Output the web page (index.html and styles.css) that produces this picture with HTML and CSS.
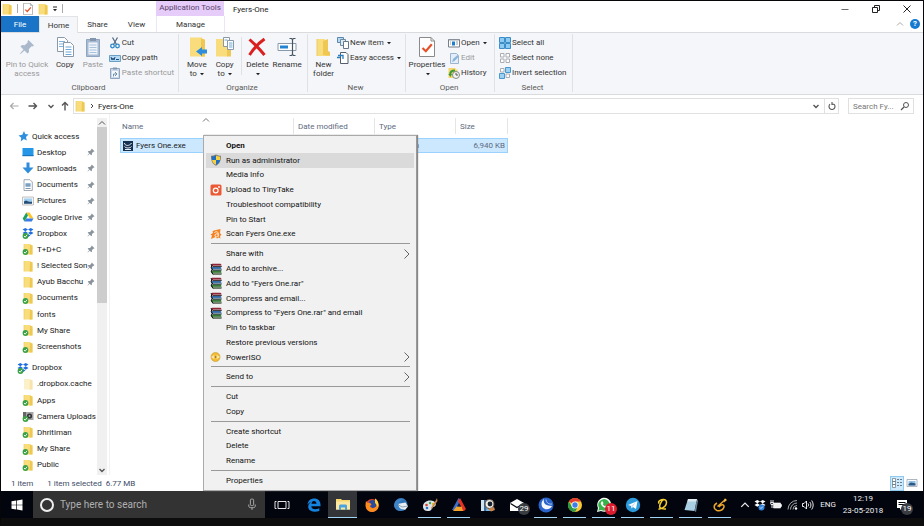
FILE: index.html
```html
<!DOCTYPE html>
<html lang="en">
<head>
    <meta charset="utf-8">
    <title>Fyers-One</title>
    <link rel="stylesheet" href="styles.css">
</head>
<body>
    <!-- icon sprites -->
    <svg class="sprites" aria-hidden="true">
        <symbol id="folder" viewBox="0 0 12 12"><path d="M2 1h6.500v1.500H10.500V11.500H2z" fill="#f9dd7c"/><path d="M8 1.500l2.500 1v9H7.500z" fill="#efc854"/><path d="M2 1v10.500" stroke="#eccb62" stroke-width=".7"/></symbol>
        <symbol id="folder-pale" viewBox="0 0 12 12"><path d="M2 1h6.500v1.500H10.500V11.500H2z" fill="#fcf0cb"/><path d="M8 1.500l2.500 1v9H7.500z" fill="#f7e3ab"/></symbol>
        <symbol id="tick" viewBox="0 0 12 12"><circle cx="3.500" cy="9" r="2.900" fill="#3ba144"/><path d="M2 9l1.200 1.200L5 7.800" fill="none" stroke="#fff" stroke-width=".9"/></symbol>
        <symbol id="folder-ok" viewBox="0 0 12 12"><use href="#folder" width="12" height="12"/><use href="#tick" width="12" height="12"/></symbol>
        <symbol id="pin" viewBox="0 0 16 16"><path d="M9.500 1l5.500 5.500-1.500 1-1-.2-2.700 3 .2 2.700-1.500 1.500-3-3L1.500 15 1 14.500l3.500-4-3-3L3 6l2.700.2 3-2.700-.2-1z" fill="currentColor"/></symbol>
        <symbol id="chev-up" viewBox="0 0 8 8"><path d="M1 5.500L4 2.500 7 5.500" fill="none" stroke="currentColor"/></symbol>
        <symbol id="chev-down" viewBox="0 0 8 8"><path d="M1.500 3L4 5.500 6.500 3" fill="none" stroke="currentColor" stroke-width="1.400"/></symbol>
        <symbol id="chev-right" viewBox="0 0 6 10"><path d="M.5.500L5 5 .5 9.500" fill="none" stroke="currentColor" stroke-width=".9"/></symbol>
        <symbol id="caret" viewBox="0 0 4 4"><path d="M0 1h4L2 3.200z" fill="#222"/></symbol>
        <symbol id="dropbox" viewBox="0 0 12 12"><path d="M3.300 1L6 2.600 3.300 4.300.5 2.600zM8.700 1l2.800 1.600-2.800 1.700L6 2.600zM3.300 4.300L6 6 3.300 7.700.5 6zM8.700 4.300L11.500 6 8.700 7.700 6 6zM3.500 8.500L6 7l2.500 1.500L6 10z" fill="#1f6fe0"/></symbol>
        <symbol id="dropbox-ok" viewBox="0 0 12 12"><use href="#dropbox" width="12" height="12"/><use href="#tick" width="12" height="12"/></symbol>
        <symbol id="sheet-check" viewBox="0 0 16 20"><path d="M.5.500h11.500l3.500 3.500v15.500H.5z" fill="#fff" stroke="#8a8a8a"/><path d="M12 .5V4h3.500" fill="none" stroke="#8a8a8a"/><path d="M3.500 11l3.300 3.200 6-7" fill="none" stroke="#e4522c" stroke-width="2.200"/></symbol>
        <symbol id="rar" viewBox="0 0 12 12"><path d="M2 .8h8.500l.8.800v2.400H3L1 2.500z" fill="#8e2638"/><path d="M1.500 4h9l.8.800v2.600H3L1 6z" fill="#2f6aa5"/><path d="M1.500 7.600h9l.8.800V11.200H3L1 9.500z" fill="#397a35"/><path d="M3 3.500h8.500M3 7h8.500M3 11h8.500" stroke="#181818" stroke-width=".9"/><path d="M3 2.800h8M3 6.300h8M3 10.200h8" stroke="#ddd" stroke-width=".6"/><path d="M1 1l1 2-1 1 1.500 3L1 8l2 3.500" fill="none" stroke="#111"/></symbol>
    </svg>

    <div class="window">
        <header class="titlebar">
            <div class="quick-bar">
                <svg class="icon"><use href="#folder"/></svg>
                <span class="bar"></span>
                <button class="plain" aria-label="Properties"><svg class="icon"><use href="#sheet-check"/></svg></button>
                <button class="plain" aria-label="New folder"><svg class="icon"><use href="#folder"/></svg></button>
                <button class="plain" aria-label="Customize"><svg class="customize" viewBox="0 0 6 6"><path d="M1 1h4" stroke="#222"/><path d="M1 3h4L3 5.200z" fill="#222"/></svg></button>
                <span class="bar"></span>
            </div>
            <div class="tools-label">Application Tools</div>
            <h1 class="title">Fyers-One</h1>
            <div class="controls">
                <button class="plain" aria-label="Minimize"><svg class="ctl" viewBox="0 0 10 10"><path d="M1.500 5.500h7" stroke="#444" stroke-width=".8"/></svg></button>
                <button class="plain" aria-label="Restore"><svg class="ctl" viewBox="0 0 10 10"><path d="M1.500 3.500h5v5h-5zM3.500 3.500v-2h5v5h-2" fill="none" stroke="#222"/></svg></button>
                <button class="plain" aria-label="Close"><svg class="ctl" viewBox="0 0 10 10"><path d="M1.500 1.500l7 7M8.500 1.500l-7 7" stroke="#222"/></svg></button>
            </div>
        </header>

        <nav class="tabs">
            <button class="tab file-tab">File</button>
            <button class="tab active">Home</button>
            <button class="tab">Share</button>
            <button class="tab">View</button>
            <button class="tab manage">Manage</button>
            <div class="tab-end">
                <button class="plain" aria-label="Collapse ribbon"><svg class="mini gray"><use href="#chev-up"/></svg></button>
                <button class="help" aria-label="Help">?</button>
            </div>
        </nav>

        <div class="ribbon">
            <section class="group clipboard">
                <div class="tools">
                    <button class="big off pin-quick"><svg class="big-icon faded"><use href="#pin"/></svg>Pin to Quick<br>access</button>
                    <button class="big"><svg class="big-icon" viewBox="0 0 20 20"><path d="M2.500.5h7l3 3v11h-10z" fill="#fff" stroke="#8b98a8"/><path d="M4 4.500h6M4 7h6M4 9.500h6" stroke="#7db4dc"/><path d="M8.500 5.500h7l3 3v11h-10z" fill="#fff" stroke="#8b98a8"/><path d="M10.500 10h6M10.500 12.500h6M10.500 15h6M10.500 17.500h6" stroke="#6ba9d8" stroke-width="1.200"/></svg>Copy</button>
                    <button class="big off"><svg class="big-icon" viewBox="0 0 20 20"><path d="M3.500 2.500h13v17h-13z" fill="#a7bad1" stroke="#8ea4c0"/><path d="M7 1h6v3H7z" fill="#8396ae"/><path d="M5.500 5.500h9v12h-9z" fill="#eef4fa"/><path d="M6.500 8h7M6.500 10.500h7M6.500 13h7M6.500 15.500h7" stroke="#a9c2db"/></svg>Paste</button>
                    <div class="stack">
                        <button class="small"><svg class="icon" viewBox="0 0 12 12"><path d="M3.500.5l4 7M8.500.5l-4 7" stroke="#52677f" stroke-width="1.200"/><circle cx="3.500" cy="9" r="1.800" fill="none" stroke="#2c87c9" stroke-width="1.300"/><circle cx="8.500" cy="9" r="1.800" fill="none" stroke="#2c87c9" stroke-width="1.300"/></svg>Cut</button>
                        <button class="small"><svg class="icon" viewBox="0 0 12 12"><path d="M.5 3.500h11v6H.5z" fill="#b6dcf5" stroke="#6d9fc2"/><path d="M2 5l1 3 1-2 1 2 1-3M7 7.500h3" fill="none" stroke="#1d4d7c"/></svg>Copy path</button>
                        <button class="small off"><svg class="icon" viewBox="0 0 12 12"><path d="M1.500 1.500h9v10h-9z" fill="#cbd8e7" stroke="#8ea4c0"/><path d="M4 .5h4v2H4z" fill="#8396ae"/><path d="M3 4h6v6H3z" fill="#f4f8fc"/><path d="M4.500 9.500V7H7.500M6 5l2 2-2 2" fill="none" stroke="#6f8eb0"/></svg>Paste shortcut</button>
                    </div>
                </div>
                <div class="caption">Clipboard</div>
            </section>
            <section class="group organize">
                <div class="tools">
                    <button class="big"><svg class="big-icon" viewBox="0 0 20 20"><path d="M3 .5h12v2h3v17H3z" fill="#f9dd7c"/><path d="M14 1l4 2v16.500h-4z" fill="#efc854"/><path d="M20 12.500v4h-5V19l-6-4.500 6-4.500v2.500z" fill="#2e8edb"/></svg>Move<br>to <svg class="caret"><use href="#caret"/></svg></button>
                    <button class="big"><svg class="big-icon" viewBox="0 0 20 20"><path d="M1 2h12v17.500H1z" fill="#f9dd7c"/><path d="M12 3l4 2v14.500h-4z" fill="#efc854"/><path d="M8.500.5h6v9h-6z" fill="#fff" stroke="#8b98a8"/><path d="M12.500 3.500h6v9h-6z" fill="#fff" stroke="#8b98a8"/><path d="M14 6h3.500M14 8h3.500M14 10h3.500M9.500 3h3" stroke="#6ba9d8"/></svg>Copy<br>to <svg class="caret"><use href="#caret"/></svg></button>
                    <span class="divider"></span>
                    <button class="big"><svg class="big-icon" viewBox="0 0 20 20"><path d="M2.500 2.500c5 4.500 10 9.500 15 15.500M17.500 2c-6 4-11 10-15 16" fill="none" stroke="#d9201f" stroke-width="3"/></svg>Delete<br><svg class="caret"><use href="#caret"/></svg></button>
                    <button class="big rename"><svg class="big-icon" viewBox="0 0 20 20"><path d="M1 6.500h18v7H1z" fill="#fff" stroke="#8b98a8"/><path d="M3 8.500h8v3H3z" fill="#2484d2"/><path d="M12.500 1.500h2l1 1 1-1h2M12.500 18.500h2l1-1 1 1h2M15.500 2.500v15" fill="none" stroke="#465564" stroke-width="1.200"/></svg>Rename</button>
                </div>
                <div class="caption">Organize</div>
            </section>
            <section class="group new">
                <div class="tools">
                    <button class="big"><svg class="big-icon" viewBox="0 0 20 20"><path d="M4 2h8v1.500h3V19H4z" fill="#f9dd7c"/><path d="M10 4l5-2v12l2 1v4l-7-1z" fill="#efc854"/><path d="M4 2v17" stroke="#eccb62"/></svg>New<br>folder</button>
                    <div class="stack">
                        <button class="small"><svg class="icon" viewBox="0 0 12 12"><path d="M.5.500h6v5h-6z" fill="#b7daf2" stroke="#5c87ab"/><path d="M3.500 2.500h5v6h-5z" fill="#dcecf7" stroke="#6d8aa5"/><path d="M6.500 4.500h5v7h-5z" fill="#fff" stroke="#6a7685"/></svg>New item<svg class="caret"><use href="#caret"/></svg></button>
                        <button class="small"><svg class="icon" viewBox="0 0 12 12"><path d="M3.500.5h5.500l2 2v9H3.500z" fill="#fff" stroke="#555f6b"/><path d="M0 5.500h3M1 3.500h5v3.500" fill="none" stroke="#2b7fc2" stroke-width="1.300"/></svg>Easy access<svg class="caret"><use href="#caret"/></svg></button>
                    </div>
                </div>
                <div class="caption">New</div>
            </section>
            <section class="group open">
                <div class="tools">
                    <button class="big props"><svg class="big-icon"><use href="#sheet-check"/></svg>Properties<br><svg class="caret"><use href="#caret"/></svg></button>
                    <div class="stack">
                        <button class="small"><svg class="icon" viewBox="0 0 12 12"><path d="M.5 2.500h11v7.500H.5z" fill="#fff" stroke="#777f88"/><path d="M1 3h10" stroke="#9aa3ac"/><path d="M4 4.500h3v4H4z" fill="#1d7ed0"/><path d="M2 5h1M2 7h1M8 5h2M8 7h2" stroke="#99a"/></svg>Open<svg class="caret"><use href="#caret"/></svg></button>
                        <button class="small off"><svg class="icon" viewBox="0 0 12 12"><path d="M2.500 1.500h6l2 2v8h-8z" fill="#e3eefa" stroke="#9db6cf"/><path d="M4 10l1-3 4.500-4 1.500 1.500L6.500 9z" fill="#8db4d8"/></svg>Edit</button>
                        <button class="small"><svg class="icon" viewBox="0 0 12 12"><path d="M.5 1h7v1.500h2V11h-9z" fill="#f6d56c"/><circle cx="8" cy="8" r="3.500" fill="#f3f3f3" stroke="#828c82"/><path d="M8 6v2h2" fill="none" stroke="#555"/><path d="M2 8c0-3 2-4.500 5-4.500" fill="none" stroke="#3a9b37" stroke-width="1.800"/><path d="M.3 7l3.800-.2L2.500 10z" fill="#3a9b37"/></svg>History</button>
                    </div>
                </div>
                <div class="caption">Open</div>
            </section>
            <section class="group select">
                <div class="tools">
                    <div class="stack">
                        <button class="small"><svg class="icon" viewBox="0 0 12 12"><path d="M.5.500h5v5h-5zM6.500.5h5v5h-5zM.5 6.500h5v5h-5zM6.500 6.500h5v5h-5z" fill="#8ecbf2" stroke="#3c8dc7"/></svg>Select all</button>
                        <button class="small"><svg class="icon" viewBox="0 0 12 12"><path d="M1.500 1.500h3.500v3.500h-3.500zM7 1.500h3.500v3.500H7zM1.500 7h3.500v3.500h-3.500zM7 7h3.500v3.500H7z" fill="#fff" stroke="#a9adb2"/></svg>Select none</button>
                        <button class="small"><svg class="icon" viewBox="0 0 12 12"><path d="M1.500 1.500H5V5H1.500zM7 7h3.500v3.500H7z" fill="#fff" stroke="#a9adb2"/><path d="M6.500.5h5v5h-5zM.5 6.500h5v5h-5z" fill="#9bd1f5" stroke="#4a97cc"/></svg>Invert selection</button>
                    </div>
                </div>
                <div class="caption">Select</div>
            </section>
        </div>

        <div class="address-row">
            <div class="arrows">
                <button class="plain" aria-label="Back"><svg class="arrow pale" viewBox="0 0 10 10"><path d="M9.500 5h-8M4.500 2l-3 3 3 3" fill="none" stroke="currentColor" stroke-width="1.200"/></svg></button>
                <button class="plain" aria-label="Forward"><svg class="arrow" viewBox="0 0 10 10"><path d="M.5 5h8M5.500 2l3 3-3 3" fill="none" stroke="currentColor" stroke-width="1.400"/></svg></button>
                <button class="plain" aria-label="Recent"><svg class="mini"><use href="#chev-down"/></svg></button>
                <button class="plain" aria-label="Up"><svg class="arrow" viewBox="0 0 10 10"><path d="M5 9.500v-8M2 4.500l3-3 3 3" fill="none" stroke="currentColor" stroke-width="1.400"/></svg></button>
            </div>
            <div class="address">
                <svg class="icon"><use href="#folder"/></svg>
                <svg class="crumb" viewBox="0 0 4 6"><path d="M1 1l2 2-2 2" fill="none" stroke="#444"/></svg>
                <span class="path">Fyers-One</span>
                <button class="plain" aria-label="Previous locations"><svg class="mini"><use href="#chev-down"/></svg></button>
                <button class="plain refresh" aria-label="Refresh"><svg class="ctl" viewBox="0 0 10 10"><path d="M3 3.200a3 3 0 1 0 4 0M7 3.200H4.500M5 1v3" fill="none" stroke="currentColor" stroke-width="1.100"/></svg></button>
            </div>
            <label class="search">
                <input type="text" placeholder="Search Fy..." aria-label="Search folder">
                <svg class="ctl" viewBox="0 0 10 10"><circle cx="6" cy="4" r="2.500" fill="none" stroke="currentColor"/><path d="M4 6L1 9" stroke="currentColor" stroke-width="1.300"/></svg>
            </label>
        </div>

        <main class="content">
            <nav class="sidebar">
                <ul class="tree">
                    <li class="root"><svg class="icon" viewBox="0 0 12 12"><path d="M7 1l1.200 3L11.500 4.500 9 7l.8 3.500-3-1.500-3 2.500.4-3.800L1.500 5.500l3.800-.8z" fill="#2f8fdf"/></svg><a href="#">Quick access</a></li>
                    <li><svg class="icon" viewBox="0 0 12 12"><path d="M.5 2h11v8H.5z" fill="#2597e6"/><path d="M.5 9h11v1.200H.5z" fill="#1a74bd"/></svg><a href="#">Desktop</a><svg class="pin"><use href="#pin"/></svg></li>
                    <li><svg class="icon" viewBox="0 0 12 12"><path d="M4.500.5h3V5.500H11.500L6 11.500.5 5.500h4z" fill="#2e8edb"/></svg><a href="#">Downloads</a><svg class="pin"><use href="#pin"/></svg></li>
                    <li><svg class="icon" viewBox="0 0 12 12"><path d="M2 .7h6l2.300 2.300v8.500H2z" fill="#fff" stroke="#8a949e" stroke-width=".8"/><path d="M3.500 4h5v4h-5z" fill="#8fb9dc"/><path d="M3.500 9.500h5M3.500 6h5" stroke="#617990" stroke-width=".8"/></svg><a href="#">Documents</a><svg class="pin"><use href="#pin"/></svg></li>
                    <li><svg class="icon" viewBox="0 0 12 12"><path d="M.5 2h11v8H.5z" fill="#f5f5f5" stroke="#b5b5b5" stroke-width=".8"/><path d="M2 3.500h8v5H2z" fill="#9fd0f1"/><path d="M2 6.500l2-1 3 1.200h3v2H2z" fill="#274d74"/></svg><a href="#">Pictures</a><svg class="pin"><use href="#pin"/></svg></li>
                    <li><svg class="icon" viewBox="0 0 12 12"><path d="M4.300 1.500h3.400l3.800 6H8z" fill="#fbc52d"/><path d="M4.300 1.500L6 4.500l-3.600 6L.7 7.500z" fill="#1ba15f"/><path d="M4.200 7.500h7.300l-1.700 3H2.400z" fill="#3b7be8"/></svg><a href="#">Google Drive</a><svg class="pin"><use href="#pin"/></svg></li>
                    <li><svg class="icon"><use href="#dropbox-ok"/></svg><a href="#">Dropbox</a><svg class="pin"><use href="#pin"/></svg></li>
                    <li><svg class="icon"><use href="#folder-ok"/></svg><a href="#">T+D+C</a><svg class="pin"><use href="#pin"/></svg></li>
                    <li><svg class="icon"><use href="#folder"/></svg><a href="#">! Selected Son</a><svg class="pin"><use href="#pin"/></svg></li>
                    <li><svg class="icon"><use href="#folder"/></svg><a href="#">Ayub Bacchu</a><svg class="pin"><use href="#pin"/></svg></li>
                    <li><svg class="icon"><use href="#folder-ok"/></svg><a href="#">Documents</a></li>
                    <li><svg class="icon"><use href="#folder"/></svg><a href="#">fonts</a></li>
                    <li><svg class="icon"><use href="#folder-ok"/></svg><a href="#">My Share</a></li>
                    <li><svg class="icon"><use href="#folder-ok"/></svg><a href="#">Screenshots</a></li>
                    <li class="gap"></li>
                    <li class="root"><svg class="icon"><use href="#dropbox-ok"/></svg><a href="#">Dropbox</a></li>
                    <li><svg class="icon"><use href="#folder-pale"/></svg><a href="#">.dropbox.cache</a></li>
                    <li><svg class="icon"><use href="#folder-ok"/></svg><a href="#">Apps</a></li>
                    <li><svg class="icon" viewBox="0 0 12 12"><path d="M1 2h10.500v8H1z" fill="#a5a5a5"/><path d="M1 2h3v8H1z" fill="#666"/><circle cx="7.500" cy="6" r="2.600" fill="#333"/><circle cx="7.500" cy="6" r="1" fill="#9ab"/><use href="#tick" width="12" height="12"/></svg><a href="#">Camera Uploads</a></li>
                    <li><svg class="icon"><use href="#folder-ok"/></svg><a href="#">Dhritiman</a></li>
                    <li><svg class="icon"><use href="#folder-ok"/></svg><a href="#">My Share</a></li>
                    <li><svg class="icon"><use href="#folder-ok"/></svg><a href="#">Public</a></li>
                </ul>
                <div class="scrollbar">
                    <svg class="mini"><use href="#chev-up"/></svg>
                    <div class="track"><div class="thumb"></div></div>
                    <svg class="mini"><use href="#chev-down"/></svg>
                </div>
            </nav>
            <div class="files">
                <table class="file-table">
                    <thead>
                        <tr><th class="name">Name<svg class="sort"><use href="#chev-up"/></svg></th><th>Date modified</th><th>Type</th><th class="size">Size</th></tr>
                    </thead>
                    <tbody>
                        <tr><td class="name"><span class="file"><svg class="icon" viewBox="0 0 12 12"><path d="M1 1h10v10H1z" fill="#16304f"/><path d="M2.500 3c0 3 5 3.500 7 0M2.500 6.500c1.500 2 5.500 2 7 0M3 9.500h6" fill="none" stroke="#e8eef5"/></svg>Fyers One.exe</span></td><td></td><td>Application</td><td class="size">6,940 KB</td></tr>
                    </tbody>
                </table>
            </div>
        </main>

        <footer class="status">
            <span>1 item</span>
            <span>1 item selected&nbsp; 6.77 MB</span>
            <div class="views">
                <button class="view on" aria-label="Details"><svg class="icon" viewBox="0 0 12 12"><path d="M1.500 1.500h3v9h-3z" fill="#fff" stroke="#76828e" stroke-width=".8"/><path d="M1.500 4.500h3M1.500 7.500h3M6 2.500h2M9 2.500h2M6 5.500h2M9 5.500h2M6 8.500h2M9 8.500h2" stroke="#5f6f80" stroke-width=".9"/></svg></button>
                <button class="view" aria-label="Large icons"><svg class="icon" viewBox="0 0 12 12"><path d="M1 2.500h10v7H1z" fill="#fff" stroke="#9aa5b0" stroke-width=".8"/><path d="M2.500 4h7v4.500h-7z" fill="#8fc0e6"/><path d="M2.500 7l2.500-1.500 4.500 1v2h-7z" fill="#2d5780"/></svg></button>
            </div>
        </footer>

        <div class="menu" role="menu">
            <button class="item strong">Open</button>
            <button class="item hover"><svg class="icon" viewBox="0 0 12 12"><path d="M6 .5c1.500 1 3 1.300 5 1.300C11 7 9.500 10 6 11.700 2.500 10 1 7 1 1.800c2 0 3.500-.3 5-1.300z" fill="#777"/><path d="M6 1.500v4.500H2C1.800 4.500 1.800 3.500 1.800 2.500 3.500 2.500 5 2.200 6 1.500zM6 6h4c-.5 2.200-2 3.900-4 4.800z" fill="#1f6fc0"/><path d="M6 1.500v4.500h4c.2-1.500.2-2.500.2-3.500C8.500 2.500 7 2.200 6 1.500zM6 6H2c.5 2.200 2 3.900 4 4.800z" fill="#f8d13f"/></svg>Run as administrator</button>
            <button class="item">Media Info</button>
            <button class="item"><svg class="icon" viewBox="0 0 12 12"><rect x=".5" y=".5" width="11" height="11" rx="1.500" fill="#ec5a35"/><circle cx="5.700" cy="6.500" r="2.400" fill="none" stroke="#fff" stroke-width="1.200"/><circle cx="9" cy="3" r=".9" fill="#fff"/></svg>Upload to TinyTake</button>
            <button class="item">Troubleshoot compatibility</button>
            <button class="item">Pin to Start</button>
            <button class="item"><svg class="icon" viewBox="0 0 12 12"><path d="M6 2l4.500-1-.5 4 1.500 2-1.500 1 .5 2.500-2-1-1.500 1-1.500-1.500L1 11l1-3.500L.5 6.500 3 5 2.500 3z" fill="#f58220"/><path d="M4.500 4.500c2-1.500 4-.5 3.800 1.500v2.500M8 6C6 5.500 4.500 6.500 5 8s2.500 1 3-.5" fill="none" stroke="#fff" stroke-width=".9"/></svg>Scan Fyers One.exe</button>
            <hr>
            <button class="item">Share with<svg class="more"><use href="#chev-right"/></svg></button>
            <button class="item"><svg class="icon"><use href="#rar"/></svg>Add to archive...</button>
            <button class="item"><svg class="icon"><use href="#rar"/></svg>Add to "Fyers One.rar"</button>
            <button class="item"><svg class="icon"><use href="#rar"/></svg>Compress and email...</button>
            <button class="item"><svg class="icon"><use href="#rar"/></svg>Compress to "Fyers One.rar" and email</button>
            <button class="item">Pin to taskbar</button>
            <button class="item">Restore previous versions</button>
            <button class="item"><svg class="icon" viewBox="0 0 12 12"><circle cx="5.500" cy="6" r="4.500" fill="#f0bd35" stroke="#c8922a" stroke-width=".6"/><path d="M1.500 6h8M4 4.300L2.500 6 4 7.700M7 4.300L8.500 6 7 7.700" fill="none" stroke="#fff7d0" stroke-width=".9"/><circle cx="5.500" cy="6" r="1" fill="#a8741c"/></svg>PowerISO<svg class="more"><use href="#chev-right"/></svg></button>
            <hr>
            <button class="item">Send to<svg class="more"><use href="#chev-right"/></svg></button>
            <hr>
            <button class="item">Cut</button>
            <button class="item">Copy</button>
            <hr>
            <button class="item">Create shortcut</button>
            <button class="item">Delete</button>
            <button class="item">Rename</button>
            <hr>
            <button class="item">Properties</button>
        </div>
    </div>

    <div class="taskbar">
        <button class="start" aria-label="Start"><svg class="icon" viewBox="0 0 12 12"><path d="M.5 2.200L5.300 1.500V5.700H.5zM6 1.400L11.500.6V5.700H6zM.5 6.300h4.800v4.200L.5 9.800zM6 6.300h5.500v5.100L6 10.600z" fill="#fff"/></svg></button>
        <label class="cortana">
            <svg class="ring" viewBox="0 0 16 16"><circle cx="8" cy="8" r="6" fill="none" stroke="#eee" stroke-width="2"/></svg>
            <input type="text" placeholder="Type here to search" aria-label="Search">
            <svg class="mic" viewBox="0 0 8 12"><rect x="2.500" y="1" width="3" height="6" rx="1" fill="none" stroke="#bbb" stroke-width=".8"/><path d="M1 6v1.500c0 1 1 1.500 3 1.500s3-.5 3-1.500V6M4 9v2" fill="none" stroke="#bbb" stroke-width=".8"/></svg>
        </label>
        <button class="task view-tasks" aria-label="Task view"><svg viewBox="0 0 16 16"><path d="M4 4.500h8v7H4zM2.500 4.500H1v7h1.500M13.500 4.500H15v7h-1.500" fill="none" stroke="#e5e5e5"/></svg></button>
        <button class="task" aria-label="Edge"><svg viewBox="0 0 16 16"><path d="M1.500 7.500C2 3.500 4.800 1.500 8.300 1.500c3.900 0 6.200 2.500 6.200 6.300v1.500H5.300c.2 3 3.800 3.700 8 1.900v2.800C8 16 2 14.200 2.200 9.500 2.300 7 4 5.200 6 4.400 4.500 4.800 2.800 5.900 1.500 7.500zM5.500 6.800h5C10.500 5.200 9.500 4 8 4S5.600 5.200 5.500 6.800z" fill="#1583dd"/></svg></button>
        <button class="task current" aria-label="File Explorer"><svg viewBox="0 0 16 16"><path d="M1 3h5l1 1h8v9.500H1z" fill="#f7d670"/><path d="M1 5.500h14v8H1z" fill="#fbe7a0"/><path d="M4 14V9.500l1-1h6l1 1V14h-2v-2.500H6V14z" fill="#4aa3df"/></svg></button>
        <button class="task" aria-label="Firefox"><svg viewBox="0 0 16 16"><circle cx="8" cy="8.500" r="6.500" fill="#e8432a"/><circle cx="8.500" cy="7" r="4" fill="#2b4a9b"/><path d="M2 4l1.500 2c2-.5 3 0 4 1.500L6 9c1 2.500 4 3 6 .5 1-2 .5-4-1-6l.5-2C14.500 4 15.500 8 14 11.500c-2.500 4.500-9 4.500-11.500.5C1.500 9.500 1.500 6.500 2 4z" fill="#f98d20"/><path d="M11 1.500c3 2 4 5.500 3 9-.5-1-1-3-3-4.500z" fill="#ffd43c"/></svg></button>
        <button class="task" aria-label="Thunderbird"><svg viewBox="0 0 16 16"><circle cx="8" cy="7.500" r="6.500" fill="#2e73b8"/><path d="M4 7l8.500-1.500 2.500 4-3 3.500-6-1z" fill="#e8edf2"/><path d="M4 7l5 3 6-1" fill="none" stroke="#8fa1b5"/><path d="M1 9c0-6 6-9 11-6.500-4 .5-6 2-6.500 4.500C5 10 8 13 12 12.500 7 15.500 2 13.500 1 9z" fill="#3c83c8"/></svg></button>
        <button class="task running" aria-label="Paint"><svg viewBox="0 0 16 16"><path d="M1 9.500C1 5.500 5 3 9 3.500c4 .3 5.500 3 4.500 5s-3 1-3.500 2.500c-.5 2.500-2 3-4.500 3C2.500 14 1 12 1 9.500z" fill="#dce4ea"/><circle cx="4.500" cy="8" r="1.300" fill="#d8402d"/><circle cx="8" cy="6" r="1.200" fill="#3fa14a"/><circle cx="11" cy="7" r="1.200" fill="#e9b62e"/><circle cx="5" cy="11" r="1.300" fill="#2f74c4"/><path d="M9 11l5-8 1-2 .5 3-5.500 8z" fill="#c4864b"/></svg></button>
        <button class="task running" aria-label="AIMP"><svg viewBox="0 0 16 16"><path d="M7.500 1L11 5.500 6 13H1z" fill="#3d6fc4"/><path d="M9 1l6 11-2 2H9.500L10 10 7 4z" fill="#e53323"/><path d="M2 14l3.500-4.500h5L12 14z" fill="#f2a52a"/><path d="M6 9.500l2-3.500 2 3.500z" fill="#121a33"/></svg></button>
        <button class="task" aria-label="Viewer"><svg viewBox="0 0 16 16"><path d="M1 3h12v11H1z" fill="#7fb7df"/><path d="M1 3h3v11H1z" fill="#cfe4f2"/><path d="M4 3h4l-2 11H4z" fill="#3d6c9c"/><circle cx="9.500" cy="7" r="4.500" fill="#f1eee8" stroke="#594538"/><circle cx="10" cy="7" r="2.400" fill="#17222c"/><path d="M8 12l6-2 1 3-4 1.500z" fill="#c7854d"/></svg></button>
        <button class="task" aria-label="Mail"><svg viewBox="0 0 16 16"><path d="M1 6l7-4 7 4v8H1z" fill="#fff"/><path d="M1.500 6.500L8 10.500l6.500-4" fill="none" stroke="#05080f" stroke-width="1.200"/></svg><span class="badge dark">29</span></button>
        <button class="task running" aria-label="CCleaner"><svg viewBox="0 0 16 16"><circle cx="8" cy="8" r="7.500" fill="#2a63c9"/><path d="M6 2c-1 4 1 7 8 7-2 4-8 4.500-10 .5-1.200-3 0-6 2-7.500z" fill="#f5f8fd"/><path d="M8 2.500C8.500 6 11 7.500 14 7" fill="none" stroke="#a7c5f0"/></svg></button>
        <button class="task running" aria-label="Chrome"><svg viewBox="0 0 16 16"><circle cx="8" cy="8" r="7" fill="#fcc934"/><path d="M8 8L1.900 4.500A7 7 0 0 1 14.100 4.500H8z" fill="#e33b2e"/><path d="M1.900 4.500L8 15A7 7 0 0 1 1.900 4.500z" fill="#279847"/><path d="M5 9.700L8 15l3-5.300z" fill="#279847"/><circle cx="8" cy="8" r="3.500" fill="#fff"/><circle cx="8" cy="8" r="2.700" fill="#3f7ee8"/></svg></button>
        <button class="task running" aria-label="WhatsApp"><svg viewBox="0 0 16 16"><path d="M1 15l1-4A7 7 0 1 1 5 14z" fill="#fff"/><path d="M2.300 13.700l.8-2.800A5.800 5.800 0 1 1 5.200 12.900z" fill="#37b34a"/><path d="M5.500 4.500l1-.3 1 2-.7 1c.5 1 1.200 1.600 2.200 2l1-.8 1.700 1c0 1.200-1 1.700-2 1.500C7 10.300 5.200 8.500 4.700 6.500z" fill="#fff"/></svg><span class="badge red">11</span></button>
        <button class="task running" aria-label="Telegram"><svg viewBox="0 0 16 16"><circle cx="8" cy="8" r="7.200" fill="#2b9bdc"/><path d="M3 8l9.500-4-1.500 8-3-2-1.500 1.500-.5-2.500z" fill="#fff"/><path d="M6 9l5-4-3.500 5" fill="#c5dcec"/></svg></button>
        <button class="task running" aria-label="Quick notes"><svg viewBox="0 0 16 16"><path d="M5 6.500C3.500 4 7 2.500 9.500 2.500c3.500 0 3.500 3.500 2 6-1.500 2.200-4.500 3.500-5.500 2S6.500 5 9.500 2.500M4.500 12.500c2-2 4.500-.5 7.500-.5" fill="none" stroke="#f5ce2c" stroke-width="1.500"/></svg></button>
        <button class="task running" aria-label="Notepad"><svg viewBox="0 0 16 16"><path d="M5 2h9l-2.500 12L1.500 13z" fill="#a8cfe3"/><path d="M5 2h9l-.5 2.500-9 0z" fill="#dfeaf0"/><path d="M14 2l1 2-2 11-1.500-1z" fill="#64849a"/></svg></button>
        <button class="task running" aria-label="Pen"><svg viewBox="0 0 16 16"><path d="M14 2L5.500 9.500M5 6C1 8 1.500 12 5 13.500c3.500 1 7.500-1.500 7-4.500-.5-2-3-1.500-5 1" fill="none" stroke="#eba62a" stroke-width="1.500"/><path d="M12.500 1.500L15 3l-3 2.500z" fill="#f3c04c"/></svg></button>
        <div class="tray">
            <button class="plain" aria-label="Show hidden icons"><svg class="tray-icon"><use href="#chev-up"/></svg></button>
            <svg class="icon" viewBox="0 0 12 12"><path d="M3.300 1L6 2.600 3.300 4.300.5 2.600zM8.700 1l2.800 1.600-2.800 1.700L6 2.600zM3.300 4.300L6 6 3.300 7.700.5 6zM8.700 4.300L11.500 6 8.700 7.700 6 6z" fill="#fff"/><circle cx="7.500" cy="8.500" r="3" fill="#2f83dd"/><path d="M6 8.500l1 1 2-2" fill="none" stroke="#fff" stroke-width=".8"/></svg>
            <svg class="icon" viewBox="0 0 12 12"><path d="M3.500 4h7v5h-7zM10.500 5.500h1v2h-1z" fill="#eee" stroke="#fff" stroke-width=".6"/><path d="M1 1v2M3 1v2M.5 3.500h3l-.5 2H1zM2 5.500V9" fill="none" stroke="#fff" stroke-width=".9"/></svg>
            <svg class="icon" viewBox="0 0 12 12"><path d="M2 10.500A9 9 0 0 1 11 1.500M4.500 10.500A6.500 6.500 0 0 1 11 4M7 10.500a4 4 0 0 1 4-4" fill="none" stroke="#bbb" stroke-width=".9"/><circle cx="10" cy="9.500" r="1.200" fill="#fff"/></svg>
            <svg class="icon" viewBox="0 0 12 12"><path d="M.5 4.500h1.500l2.500-2.500v8L2 7.500H.5zM6 4.500c.8 1 .8 2 0 3M7.800 3c1.500 2 1.500 4 0 6M9.700 1.500c2 3 2 6 0 9" fill="none" stroke="#fff" stroke-width=".9"/></svg>
            <span class="lang">ENG</span>
            <div class="clock">12:19<br>23-05-2018</div>
            <button class="plain notify" aria-label="Notifications"><svg class="icon" viewBox="0 0 12 12"><path d="M1 1h10v8H6l-2 2V9H1z" fill="#fff"/><path d="M2.500 3.500h7M2.500 5.500h7" stroke="#05080f"/></svg><span class="badge dark">19</span></button>
        </div>
    </div>
</body>
</html>
```

FILE: styles.css
```css
* {
    box-sizing: border-box;
}
body {
    margin: 0;
    height: 100vh;
    display: flex;
    flex-direction: column;
    background-color: #0d0d0d;
    border: 1px solid #07050a;
    border-bottom: 8px solid #0d0d0d;
    font-family: Roboto, "Open Sans", sans-serif;
    font-size: 8px;
    line-height: 9px;
    color: #1a1a1a;
}
button, input {
    font: inherit;
    color: inherit;
    background: none;
    border: none;
    padding: 0;
    margin: 0;
}
input {
    min-width: 0;
    flex: 1;
}
a {
    color: inherit;
    text-decoration: none;
}
svg {
    display: block;
    flex: none;
}
.sprites {
    position: absolute;
    width: 0;
    height: 0;
}
.icon {
    width: 12px;
    height: 12px;
}
.mini {
    width: 8px;
    height: 8px;
    color: #555;
}
.customize {
    width: 6px;
    height: 6px;
}
.ctl, .arrow {
    width: 10px;
    height: 10px;
    color: #555;
}
.pale, .gray {
    color: #aaa;
}
.plain {
    display: flex;
    align-items: center;
    justify-content: center;
}
.window {
    position: relative;
    flex: 1;
    min-height: 0;
    display: flex;
    flex-direction: column;
    background-color: #fff;
}

/* title bar */
.titlebar {
    display: flex;
    height: 15px;
    align-items: center;
}
.quick-bar {
    width: 155px;
    display: flex;
    align-items: center;
    gap: 3px;
}
.quick-bar .bar {
    width: 1px;
    height: 9px;
    margin: 0 1px;
    background-color: #aaa;
}
.tools-label {
    width: 68px;
    height: 15px;
    line-height: 14px;
    text-align: center;
    white-space: nowrap;
    background-color: #e6ccf8;
    color: #59416b;
}
.title {
    margin: 1px 0 0 9px;
    font-size: 8px;
    font-weight: normal;
    flex: 1;
}
.controls {
    display: flex;
    gap: 21px;
    padding-right: 11px;
}

/* ribbon tabs */
.tabs {
    display: flex;
    height: 16px;
}
.tab {
    width: 39px;
    color: #333;
}
.tab.file-tab {
    width: 38px;
    background-color: #1974c8;
    color: #fff;
}
.tab.active {
    background-color: #f5f6f9;
    border: 1px solid #e2e3e5;
    border-bottom: none;
    margin-bottom: -1px;
    z-index: 1;
}
.tab.manage {
    width: 69px;
    border: 1px solid #eee5f4;
    border-width: 0 1px;
}
.tab-end {
    margin-left: auto;
    display: flex;
    align-items: center;
    gap: 6px;
    padding-right: 3px;
}
.help {
    width: 10px;
    height: 10px;
    line-height: 10px;
    border-radius: 50%;
    background-color: #1479d0;
    color: #fff;
    font-weight: bold;
}

/* ribbon */
.ribbon {
    display: flex;
    height: 63px;
    background-color: #f5f6f9;
    border: 1px solid #dadbdc;
    border-width: 1px 0;
}
.group {
    display: flex;
    flex-direction: column;
    justify-content: space-between;
    margin: 1px 0 2px;
    padding: 3px 4px 0 2px;
    border-right: 1px solid #e0e1e4;
}
.clipboard {
    width: 178px;
}
.organize {
    width: 129px;
}
.new {
    width: 98px;
}
.open {
    width: 89px;
}
.select {
    width: 78px;
}
.tools {
    display: flex;
    align-items: flex-start;
}
.caption {
    text-align: center;
    color: #5a5a5a;
}
.big {
    width: 28px;
    white-space: nowrap;
    display: block;
    color: #333;
}
.big.pin-quick {
    width: 48px;
}
.big.props {
    width: 38px;
}
.big.rename {
    width: 32px;
}
.big-icon {
    width: 20px;
    height: 20px;
    margin: 0 auto 3px;
}
.faded {
    color: #a9b9cb;
    padding: 2px;
}
.off {
    color: #999;
}
.caret {
    display: inline-block;
    width: 4px;
    height: 4px;
    margin-left: 1px;
}
.stack {
    margin: -2px 0 0 2px;
}
.small {
    display: flex;
    align-items: center;
    gap: 1px;
    height: 15px;
    white-space: nowrap;
    color: #333;
}
.small.off {
    color: #999;
}
.small .caret {
    margin-left: 2px;
}
.organize .tools, .new .tools {
    padding-left: 2px;
}
.divider {
    width: 1px;
    height: 38px;
    margin: 0 2px;
    background-color: #e0e1e4;
}

/* address bar */
.address-row {
    display: flex;
    padding: 3px 9px 0 0;
    height: 19px;
    gap: 9px;
}
.arrows {
    display: flex;
    align-items: center;
    gap: 9px;
    padding-left: 8px;
    width: 63px;
}
.arrows .mini {
    margin-right: -4px;
}
.address, .search {
    display: flex;
    align-items: center;
    border: 1px solid #e0e0e0;
}
.address {
    flex: 1;
    gap: 4px;
}
.crumb {
    width: 4px;
    height: 6px;
}
.path {
    flex: 1;
}
.refresh {
    width: 14px;
    height: 14px;
    border-left: 1px solid #e0e0e0;
}
.search {
    width: 66px;
    padding: 0 3px 0 4px;
}
.search input::placeholder {
    color: #777;
}

/* folder view */
.content {
    flex: 1;
    min-height: 0;
    display: flex;
}
.sidebar {
    display: flex;
    width: 109px;
    border-right: 1px solid #f2f2f2;
    padding-top: 4px;
}
.tree {
    flex: 1;
    min-width: 0;
    list-style: none;
    margin: 0;
    padding: 10px 0 2px;
    display: flex;
    flex-direction: column;
    white-space: nowrap;
}
.tree li {
    flex: 1;
    display: flex;
    align-items: center;
    gap: 3px;
    padding-left: 21px;
}
.tree li.root {
    padding-left: 16px;
}
.tree li.gap {
    flex: none;
    height: 5px;
}
.tree a {
    flex: 1;
    min-width: 0;
}
.tree .pin {
    width: 8px;
    height: 8px;
    margin-right: 2px;
    color: #8b949d;
}
.scrollbar {
    width: 10px;
    margin-right: 2px;
    display: flex;
    flex-direction: column;
    align-items: center;
    background-color: #f0f0f0;
    padding: 1px 0;
}
.track {
    flex: 1;
    width: 100%;
}
.thumb {
    height: 52%;
    background-color: #cdcdcd;
}
.files {
    flex: 1;
    padding: 4px 0 0 10px;
}
.file-table {
    width: 388px;
    table-layout: fixed;
    border-collapse: separate;
    border-spacing: 0;
    color: #5d6a80;
}
.file-table th {
    height: 16px;
    padding: 0 4px;
    text-align: left;
    font-weight: normal;
    width: 81px;
    border-right: 1px solid #e5e5e5;
}
.file-table th.name {
    position: relative;
    width: 174px;
    padding-left: 2px;
}
.file-table th.size {
    width: 52px;
}
.sort {
    position: absolute;
    top: -2px;
    left: calc(50% - 5px);
    width: 8px;
    height: 8px;
    color: #777;
}
.file-table tbody::before {
    content: "";
    display: block;
    height: 4px;
}
.file-table td {
    height: 15px;
    padding: 0 4px;
    background-color: #cce8ff;
    border: 1px solid #99d1ff;
    border-width: 1px 0;
}
.file-table td.name {
    padding-left: 1px;
    border-left-width: 1px;
    color: #1a1a1a;
}
.file-table td.size {
    padding-right: 2px;
    text-align: right;
    border-right-width: 1px;
}
.file {
    display: flex;
    align-items: center;
    gap: 2px;
}

/* status bar */
.status {
    height: 16px;
    display: flex;
    align-items: center;
    gap: 14px;
    padding-left: 10px;
    color: #3b4a66;
}
.views {
    margin-left: auto;
    display: flex;
    gap: 1px;
    padding-right: 4px;
}
.view {
    width: 14px;
    height: 15px;
    display: flex;
    align-items: center;
    justify-content: center;
}
.view.on {
    background-color: #cde9fb;
    border: 1px solid #8fcbee;
}

/* context menu, floats over the file list */
.menu {
    position: absolute;
    top: 134px;
    left: 202px;
    bottom: 0;
    width: 214px;
    display: flex;
    flex-direction: column;
    padding: 2px;
    background-color: #f1f1f1;
    border: 1px solid #aaa;
    border-right-color: #999;
    box-shadow: 1px 0 1px #888;
    color: #111;
}
.item {
    flex: 1;
    min-height: 0;
    display: flex;
    align-items: center;
    position: relative;
    padding-left: 20px;
    white-space: nowrap;
}
.item .icon {
    margin: 0 4px 0 -16px;
}
.item.strong {
    font-weight: bold;
}
.item.hover {
    background-color: #dadada;
}
.more {
    width: 6px;
    height: 10px;
    margin-left: auto;
    margin-right: 4px;
    color: #555;
}
.menu hr {
    width: calc(100% - 9px);
    height: 1px;
    margin: 2px 4px 2px 5px;
    border: none;
    background-color: #999;
}

/* taskbar */
.taskbar {
    display: flex;
    height: 27px;
    background-color: #02050e;
    color: #eee;
}
.start {
    width: 32px;
    display: flex;
    align-items: center;
    justify-content: center;
}
.cortana {
    width: 232px;
    display: flex;
    align-items: center;
    background-color: #333;
    padding: 0 8px 0 6px;
    gap: 5px;
    font-size: 10px;
}
.cortana input::placeholder {
    color: #b0b0b0;
}
.ring {
    width: 16px;
    height: 16px;
}
.mic {
    width: 10px;
    height: 13px;
}
.task {
    position: relative;
    width: 29px;
    display: flex;
    align-items: center;
    justify-content: center;
}
.task svg {
    width: 16px;
    height: 16px;
}
.task.view-tasks {
    width: 34px;
}
.task.current {
    background-color: #333538;
    border-bottom: 1px solid #9fd3f7;
}
.task.running::after {
    content: "";
    position: absolute;
    left: 3px;
    right: 3px;
    bottom: 0;
    height: 1px;
    background-color: #9fd3f7;
}
.badge {
    position: absolute;
    right: 1px;
    bottom: 3px;
    width: 12px;
    height: 12px;
    line-height: 12px;
    border-radius: 50%;
    text-align: center;
    color: #fff;
}
.badge.dark {
    background-color: #3a3d42;
}
.badge.red {
    background-color: #dd1c2e;
}
.tray {
    flex: 1;
    display: flex;
    align-items: center;
    justify-content: flex-end;
    gap: 4px;
    padding-right: 9px;
}
.tray-icon {
    width: 10px;
    height: 10px;
    color: #eee;
}
.lang {
    margin-left: 2px;
}
.clock {
    width: 46px;
    line-height: 12px;
    text-align: center;
}
.notify {
    position: relative;
    width: 24px;
    height: 27px;
}
```
